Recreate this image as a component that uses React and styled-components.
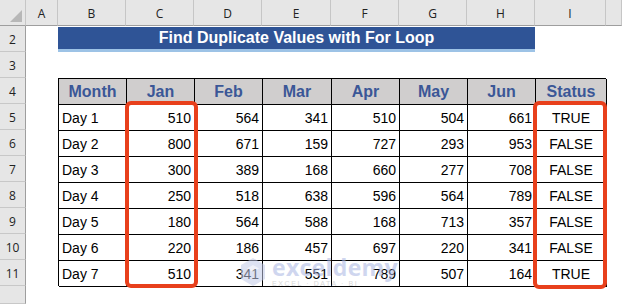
import React from 'react'
import styled, { createGlobalStyle } from 'styled-components'

const GlobalStyle = createGlobalStyle`
  html, body {
    margin: 0;
    padding: 0;
    background: #fff;
    overflow: hidden;
  }
  body {
    font-family: "Liberation Sans", Arial, sans-serif;
  }
`

const COLS = ['A', 'B', 'C', 'D', 'E', 'F', 'G', 'H', 'I', '']
const MONTHS = ['Month', 'Jan', 'Feb', 'Mar', 'Apr', 'May', 'Jun', 'Status']
const DATA = [
  ['Day 1', 510, 564, 341, 510, 504, 661, 'TRUE'],
  ['Day 2', 800, 671, 159, 727, 293, 953, 'FALSE'],
  ['Day 3', 300, 389, 168, 660, 277, 708, 'FALSE'],
  ['Day 4', 250, 518, 638, 596, 564, 789, 'FALSE'],
  ['Day 5', 180, 564, 588, 168, 713, 357, 'FALSE'],
  ['Day 6', 220, 186, 457, 697, 220, 341, 'FALSE'],
  ['Day 7', 510, 341, 551, 789, 507, 164, 'TRUE'],
]

const Sheet = styled.div`
  display: grid;
  grid-template-columns: 26px 32px 68px 68px 68px 69px 68px 68px 68px 71px 1fr;
  grid-template-rows: repeat(11, 26px) 1fr;
  width: 622px;
  height: 304px;
  position: relative;
`

const Corner = styled.div`
  background: #e6e6e6;
  border-right: 1px solid #c6c6c6;
  border-bottom: 1px solid #9e9e9e;
  position: relative;
  &::after {
    content: '';
    position: absolute;
    right: 3px;
    bottom: 3px;
    border-style: solid;
    border-width: 0 0 12px 12px;
    border-color: transparent transparent #b7b7b7 transparent;
  }
`

const ColHead = styled.div`
  background: #e6e6e6;
  border-right: 1px solid #c6c6c6;
  border-bottom: 1px solid #9e9e9e;
  display: flex;
  align-items: center;
  justify-content: center;
  font-family: "Open Sans", "Liberation Sans", sans-serif;
  font-size: 12px;
  color: #222;
  padding-top: 1px;
`

const RowHead = styled.div`
  grid-column: 1;
  grid-row: ${(p) => p.row};
  background: #e6e6e6;
  border-right: 1px solid #9e9e9e;
  border-bottom: 1px solid #c8c8c8;
  display: flex;
  align-items: center;
  justify-content: center;
  font-family: "Open Sans", "Liberation Sans", sans-serif;
  font-size: 12px;
  color: #222;
  padding-top: 2px;
`

const Title = styled.div`
  grid-column: 3 / 10;
  grid-row: 2;
  margin-top: 1px;
  background: #2f5496;
  border-bottom: 3px solid #9dc3e6;
  color: #fff;
  font-weight: bold;
  font-size: 16px;
  display: flex;
  align-items: center;
  justify-content: center;
`

const Table = styled.div`
  grid-column: 3 / 11;
  grid-row: 4 / 12;
  display: grid;
  grid-template-columns: 68px 68px 68px 69px 68px 68px 68px 71px;
  grid-template-rows: repeat(8, 26px);
  border-top: 1px solid #000;
  border-left: 1px solid #000;
  box-sizing: border-box;
  position: relative;
`

const Cell = styled.div`
  border-right: 1px solid #000;
  border-bottom: 1px solid #000;
  display: flex;
  align-items: center;
  justify-content: ${(p) => p.align === 'left' ? 'flex-start' : p.align === 'center' ? 'center' : 'flex-end'};
  padding: 1px 3px 0 3px;
  font-size: 14px;
  color: #000;
  background: #fff;
  white-space: nowrap;
`

const HeadCell = styled(Cell)`
  background: #d0cece;
  color: #3b5797;
  font-weight: bold;
  font-size: 16px;
  justify-content: center;
`

const Highlight = styled.div`
  position: absolute;
  left: ${(p) => p.left}px;
  top: 22px;
  width: ${(p) => p.width}px;
  height: ${(p) => p.height}px;
  border: 4px solid #e8401c;
  border-radius: 6px;
  box-sizing: border-box;
  pointer-events: none;
`

const Watermark = styled.div`
  position: absolute;
  left: 240px;
  top: 256px;
  display: flex;
  align-items: center;
  gap: 6px;
  opacity: 0.55;
  pointer-events: none;
`

const WaterText = styled.div`
  display: flex;
  flex-direction: column;
  line-height: 1;
`

const WaterName = styled.span`
  font-family: "Open Sans", "Liberation Sans", sans-serif;
  font-weight: bold;
  font-size: 23px;
  color: #a9b6e2;
  letter-spacing: 0.3px;
`

const WaterTag = styled.span`
  font-size: 7px;
  color: #b9b9b9;
  letter-spacing: 1.6px;
  margin-top: 1px;
`

const App = () => {
  return (
    <>
      <GlobalStyle />
      <Sheet>
        <Corner />
        {COLS.map((c, i) => <ColHead key={i}>{c}</ColHead>)}
        {[2, 3, 4, 5, 6, 7, 8, 9, 10, 11, ''].map((n, i) => (
          <RowHead key={i} row={i + 2}>{n}</RowHead>
        ))}
        <Title>Find Duplicate Values with For Loop</Title>
        <Table>
          {MONTHS.map((m) => <HeadCell key={m}>{m}</HeadCell>)}
          {DATA.map((row) => row.map((v, j) => (
            <Cell key={row[0] + j} align={j === 0 ? 'left' : j === 7 ? 'center' : 'right'}>{v}</Cell>
          )))}
          <Highlight left={66} width={73} height={187} />
          <Highlight left={474} width={74} height={188} />
        </Table>
        <Watermark>
          <svg width="26" height="30" viewBox="0 0 26 30">
            <path d="M13 1 L25 8 L25 22 L13 29 L1 22 L1 8 Z" fill="#c3cbe8" />
            <path d="M13 8 L19 11.5 L13 15 L7 11.5 Z" fill="#e4e8f5" />
          </svg>
          <WaterText>
            <WaterName>exceldemy</WaterName>
            <WaterTag>EXCEL · DATA · BI</WaterTag>
          </WaterText>
        </Watermark>
      </Sheet>
    </>
  )
}

export default App
